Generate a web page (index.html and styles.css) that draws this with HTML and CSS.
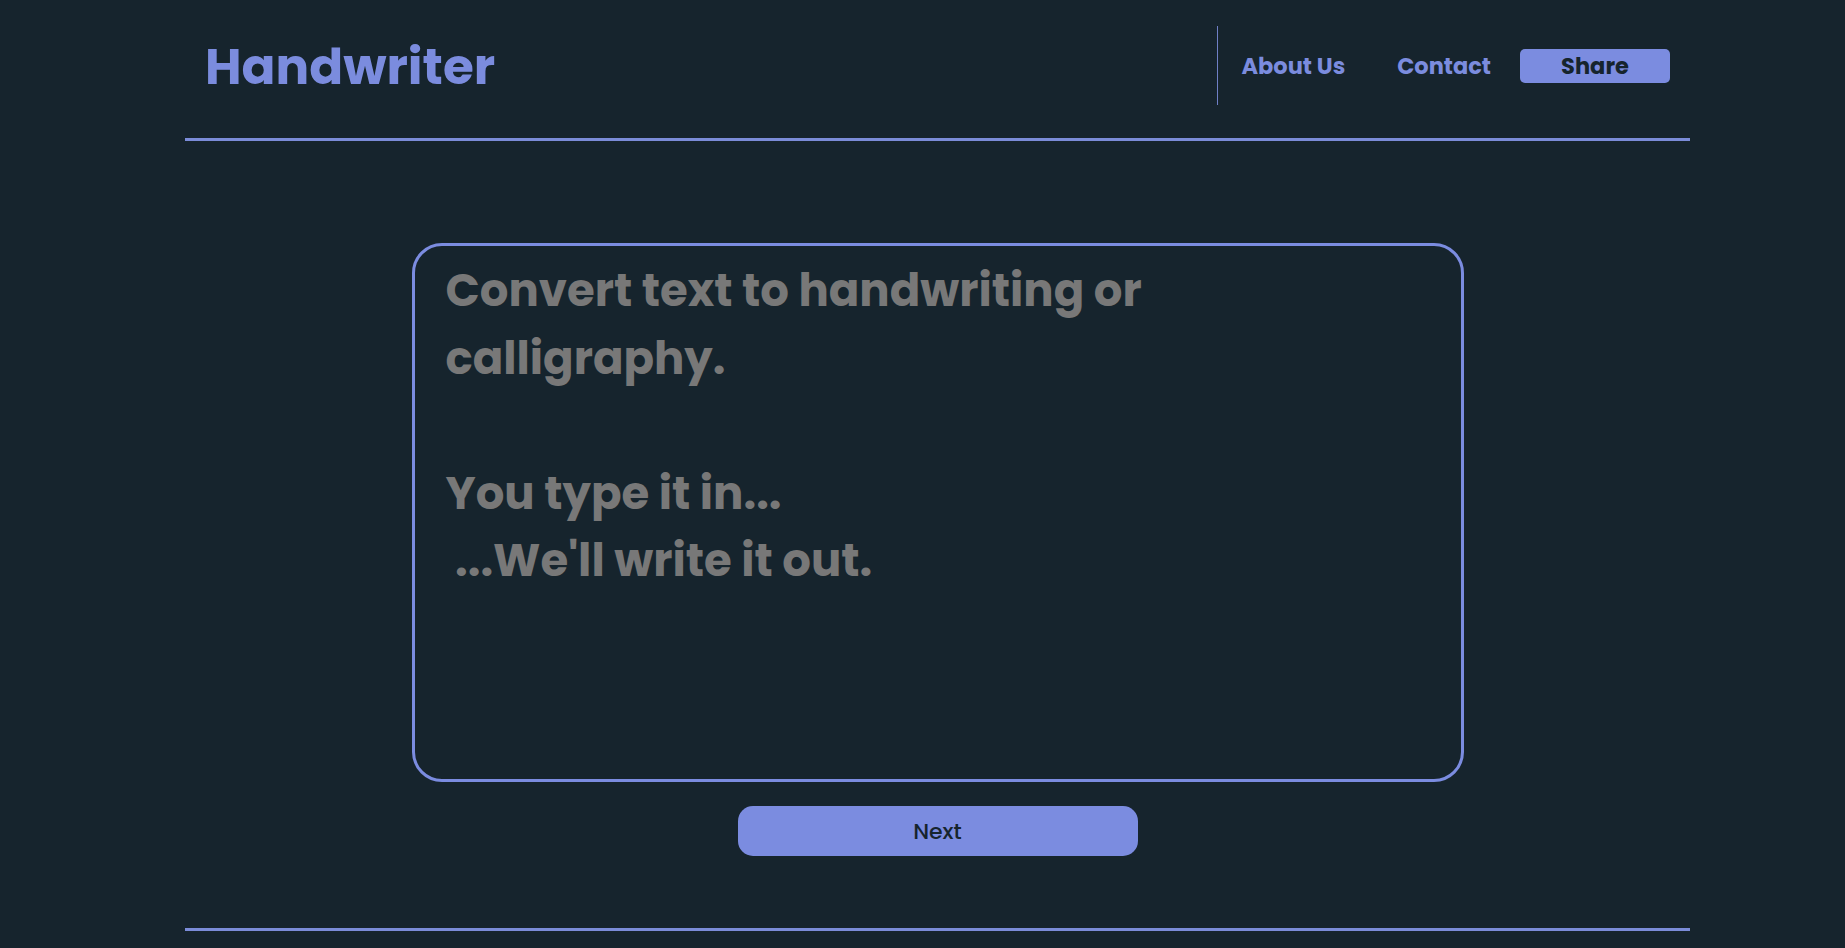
FILE: index.html
```html
<!DOCTYPE html>
<html lang="en">
<head>
<meta charset="utf-8">
<title>Handwriter</title>
<link rel="stylesheet" href="styles.css">
</head>
<body>
<div class="page">
  <header class="site-header">
    <div class="logo">Handwriter</div>
    <nav class="nav">
      <span class="nav-divider"></span>
      <a class="nav-link about" href="#">About Us</a>
      <a class="nav-link contact" href="#">Contact</a>
      <a class="share-btn" href="#">Share</a>
    </nav>
  </header>
  <hr class="rule top-rule">
  <main class="main">
    <div class="input-box">
      <div class="placeholder">Convert text to handwriting or
calligraphy.

You type it in...
 ...We'll write it out.</div>
    </div>
    <button class="next-btn" type="button">Next</button>
  </main>
  <hr class="rule bottom-rule">
</div>
</body>
</html>
```
FILE: styles.css
```css
html, body {
  margin: 0;
  padding: 0;
  background: #16242d;
}
body {
  font-family: "Poppins", Inter, "Noto Sans", sans-serif;
  height: 948px;
  overflow: hidden;
}
.page {
  width: 1505px;
  margin-left: 185px;
}
.site-header {
  display: flex;
  align-items: center;
  justify-content: space-between;
  height: 79px;
  padding: 26px 20px 0 20px;
}
.logo {
  color: #7b8cde;
  font-weight: 700;
  font-size: 50px;
  line-height: 1;
  padding-top: 2px;
}
.nav {
  display: flex;
  align-items: center;
  height: 79px;
}
.nav-divider {
  width: 1px;
  height: 79px;
  background: #6f7fc6;
}
.nav-link {
  color: #7b8cde;
  font-weight: 700;
  font-size: 22.5px;
  text-decoration: none;
  line-height: 1;
  padding-top: 2px;
}
.about { margin-left: 24px; }
.contact { margin-left: 52px; }
.share-btn {
  margin-left: 29px;
  width: 150px;
  height: 34px;
  border-radius: 5px;
  background: #7b8ce0;
  color: #16242d;
  font-weight: 700;
  font-size: 22.5px;
  text-decoration: none;
  display: flex;
  align-items: center;
  justify-content: center;
}
.rule {
  border: 0;
  height: 3px;
  background: #7b8cd8;
  margin: 0;
}
.top-rule {
  margin-top: 33px;
}
.main {
  display: flex;
  flex-direction: column;
  align-items: center;
  padding-top: 102px;
}
.input-box {
  box-sizing: border-box;
  width: 1052px;
  height: 539px;
  border: 3px solid #7b8ce0;
  border-radius: 30px;
  padding: 11px 31px;
}
.placeholder {
  white-space: pre-wrap;
  color: #787878;
  font-weight: 700;
  font-size: 45px;
  line-height: 67.5px;
}
.next-btn {
  margin-top: 24px;
  width: 400px;
  height: 50px;
  border: 0;
  border-radius: 15px;
  background: #7b8ce0;
  color: #16242d;
  font-family: "Poppins", Inter, "Noto Sans", sans-serif;
  font-size: 22px;
  font-weight: 500;
  cursor: pointer;
}
.bottom-rule {
  margin-top: 72px;
}
```
